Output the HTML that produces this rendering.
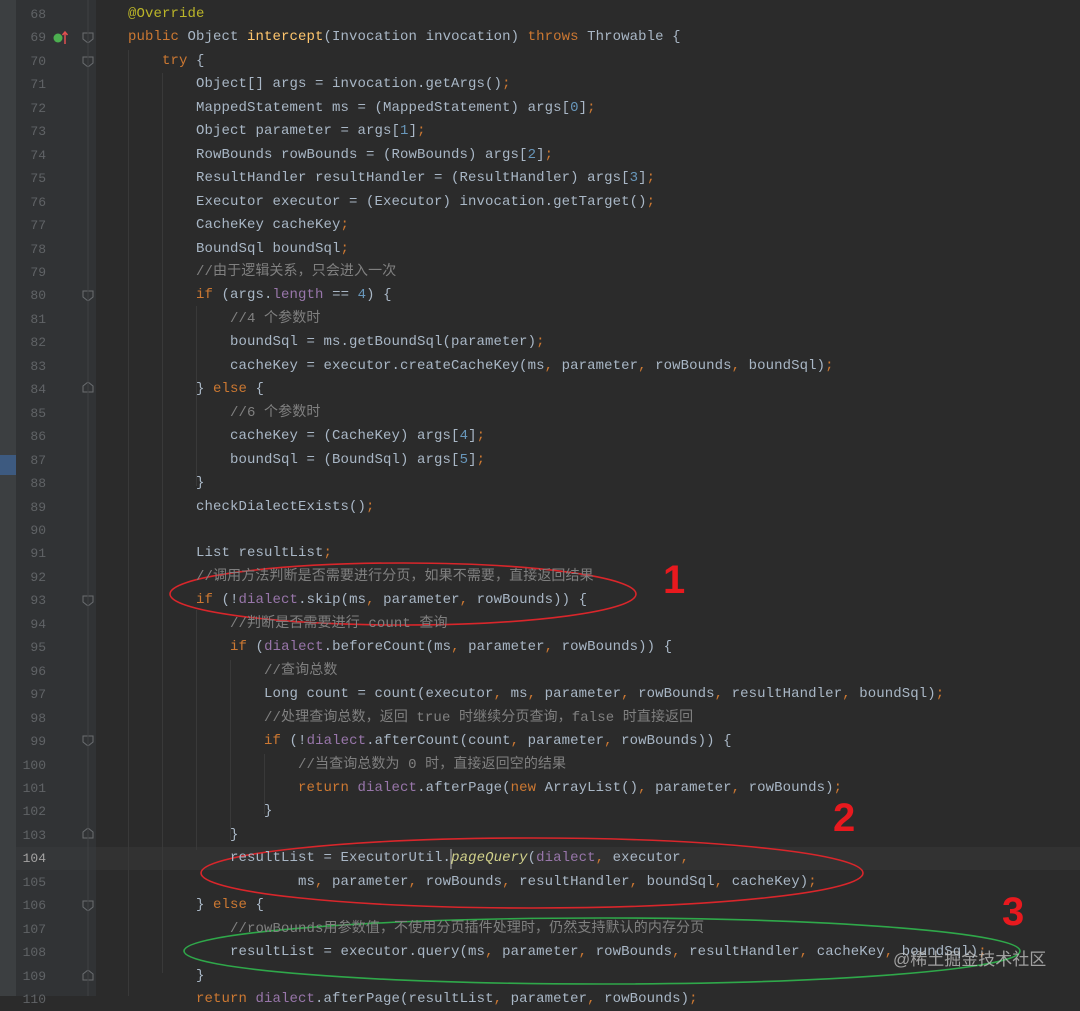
<!DOCTYPE html>
<html><head><meta charset="utf-8"><style>
html,body{margin:0;padding:0;width:1080px;height:996px;overflow:hidden;background:#2b2b2b}
.strip{position:absolute;left:0;top:0;width:16px;height:996px;background:#3c3f41}
.gut{position:absolute;left:16px;top:0;width:80px;height:996px;background:#313335}
.cur{position:absolute;left:96px;top:847px;width:984px;height:23px;background:#323232}
.cur2{position:absolute;left:16px;top:847px;width:80px;height:23px;background:#353739}
.ln{position:absolute;left:0;width:46px;text-align:right;font:13px "Liberation Mono",monospace;color:#606366;line-height:23.45px}
.code{position:absolute;left:128px;white-space:pre;font:14px "Liberation Mono","Noto Sans CJK SC",monospace;letter-spacing:0.1px;color:#a9b7c6;line-height:23.45px}
.k{color:#cc7832}.c{color:#808080}.f{color:#9876aa}.n{color:#6897bb}.a{color:#bbb529}.m{color:#ffc66d}.i{font-style:italic;color:#d0d08a}
.guide{position:absolute;width:1px;background:#393939}
.num{position:absolute;font:bold 40px "Liberation Sans",sans-serif;color:#e8191e}
.wm{position:absolute;left:893px;top:945px;font:17px "Liberation Sans","Noto Sans CJK SC",sans-serif;color:rgba(200,200,200,0.75)}
</style></head><body>
<div class="strip"></div><div style="position:absolute;left:0;top:455px;width:16px;height:20px;background:#3d5a80"></div>
<div class="gut"></div><div class="cur"></div><div class="cur2"></div>
<div class="guide" style="left:128px;top:50px;height:946px"></div>
<div class="guide" style="left:162px;top:73px;height:900px"></div>
<div class="guide" style="left:196px;top:306px;height:180px"></div>
<div class="guide" style="left:196px;top:610px;height:240px"></div>
<div class="guide" style="left:230px;top:660px;height:180px"></div>
<div class="guide" style="left:264px;top:754px;height:60px"></div>
<svg style="position:absolute;left:0;top:0" width="1080" height="996">
<g fill="none" stroke="#6a6d70" stroke-width="1">
<path d="M83 33h10v6l-5 4l-5-4z"/><path d="M83 57h10v6l-5 4l-5-4z"/>
<path d="M83 291h10v6l-5 4l-5-4z"/><path d="M83 596h10v6l-5 4l-5-4z"/><path d="M83 736h10v6l-5 4l-5-4z"/>
<path d="M83 901h10v6l-5 4l-5-4z"/>
<path d="M83 392h10v-6l-5-4l-5 4z"/><path d="M83 838h10v-6l-5-4l-5 4z"/><path d="M83 980h10v-6l-5-4l-5 4z"/>
<line x1="88" y1="0" x2="88" y2="996" stroke="#3e4042"/>
</g>
<circle cx="58" cy="38" r="4.5" fill="#4caf50"/><path d="M65 44V32m-2.5 3l2.5-3l2.5 3" stroke="#e05050" stroke-width="1.5" fill="none"/>
<ellipse cx="403" cy="594" rx="233" ry="31" fill="none" stroke="#d9262b" stroke-width="1.6"/>
<ellipse cx="532" cy="873" rx="331" ry="35" fill="none" stroke="#d9262b" stroke-width="1.6"/>
<ellipse cx="602" cy="951" rx="418" ry="33" fill="none" stroke="#2fa84a" stroke-width="1.6"/>
<line x1="451" y1="849" x2="451" y2="869" stroke="#bbb"/>
</svg>
<div class="ln" style="top:3px">68<br>69<br>70<br>71<br>72<br>73<br>74<br>75<br>76<br>77<br>78<br>79<br>80<br>81<br>82<br>83<br>84<br>85<br>86<br>87<br>88<br>89<br>90<br>91<br>92<br>93<br>94<br>95<br>96<br>97<br>98<br>99<br>100<br>101<br>102<br>103<br><span style="color:#a4a3a3">104</span><br>105<br>106<br>107<br>108<br>109<br>110</div>
<div class="code" style="top:3px"><span class="a">@Override</span>
<span class="k">public </span>Object <span class="m">intercept</span>(Invocation invocation) <span class="k">throws </span>Throwable {
    <span class="k">try </span>{
        Object[] args = invocation.getArgs()<span class="k">;</span>
        MappedStatement ms = (MappedStatement) args[<span class="n">0</span>]<span class="k">;</span>
        Object parameter = args[<span class="n">1</span>]<span class="k">;</span>
        RowBounds rowBounds = (RowBounds) args[<span class="n">2</span>]<span class="k">;</span>
        ResultHandler resultHandler = (ResultHandler) args[<span class="n">3</span>]<span class="k">;</span>
        Executor executor = (Executor) invocation.getTarget()<span class="k">;</span>
        CacheKey cacheKey<span class="k">;</span>
        BoundSql boundSql<span class="k">;</span>
        <span class="c">//由于逻辑关系，只会进入一次</span>
        <span class="k">if </span>(args.<span class="f">length </span>== <span class="n">4</span>) {
            <span class="c">//4 个参数时</span>
            boundSql = ms.getBoundSql(parameter)<span class="k">;</span>
            cacheKey = executor.createCacheKey(ms<span class="k">, </span>parameter<span class="k">, </span>rowBounds<span class="k">, </span>boundSql)<span class="k">;</span>
        } <span class="k">else </span>{
            <span class="c">//6 个参数时</span>
            cacheKey = (CacheKey) args[<span class="n">4</span>]<span class="k">;</span>
            boundSql = (BoundSql) args[<span class="n">5</span>]<span class="k">;</span>
        }
        checkDialectExists()<span class="k">;</span>

        List resultList<span class="k">;</span>
        <span class="c">//调用方法判断是否需要进行分页，如果不需要，直接返回结果</span>
        <span class="k">if </span>(!<span class="f">dialect</span>.skip(ms<span class="k">, </span>parameter<span class="k">, </span>rowBounds)) {
            <span class="c">//判断是否需要进行 count 查询</span>
            <span class="k">if </span>(<span class="f">dialect</span>.beforeCount(ms<span class="k">, </span>parameter<span class="k">, </span>rowBounds)) {
                <span class="c">//查询总数</span>
                Long count = count(executor<span class="k">, </span>ms<span class="k">, </span>parameter<span class="k">, </span>rowBounds<span class="k">, </span>resultHandler<span class="k">, </span>boundSql)<span class="k">;</span>
                <span class="c">//处理查询总数，返回 true 时继续分页查询，false 时直接返回</span>
                <span class="k">if </span>(!<span class="f">dialect</span>.afterCount(count<span class="k">, </span>parameter<span class="k">, </span>rowBounds)) {
                    <span class="c">//当查询总数为 0 时，直接返回空的结果</span>
                    <span class="k">return </span><span class="f">dialect</span>.afterPage(<span class="k">new </span>ArrayList()<span class="k">, </span>parameter<span class="k">, </span>rowBounds)<span class="k">;</span>
                }
            }
            resultList = ExecutorUtil.<span class="i">pageQuery</span>(<span class="f">dialect</span><span class="k">, </span>executor<span class="k">,</span>
                    ms<span class="k">, </span>parameter<span class="k">, </span>rowBounds<span class="k">, </span>resultHandler<span class="k">, </span>boundSql<span class="k">, </span>cacheKey)<span class="k">;</span>
        } <span class="k">else </span>{
            <span class="c">//rowBounds用参数值，不使用分页插件处理时，仍然支持默认的内存分页</span>
            resultList = executor.query(ms<span class="k">, </span>parameter<span class="k">, </span>rowBounds<span class="k">, </span>resultHandler<span class="k">, </span>cacheKey<span class="k">, </span>boundSql)<span class="k">;</span>
        }
        <span class="k">return </span><span class="f">dialect</span>.afterPage(resultList<span class="k">, </span>parameter<span class="k">, </span>rowBounds)<span class="k">;</span></div>
<div class="num" style="left:663px;top:558px">1</div>
<div class="num" style="left:833px;top:796px">2</div>
<div class="num" style="left:1002px;top:890px">3</div>
<div class="wm">@稀土掘金技术社区</div>
</body></html>
